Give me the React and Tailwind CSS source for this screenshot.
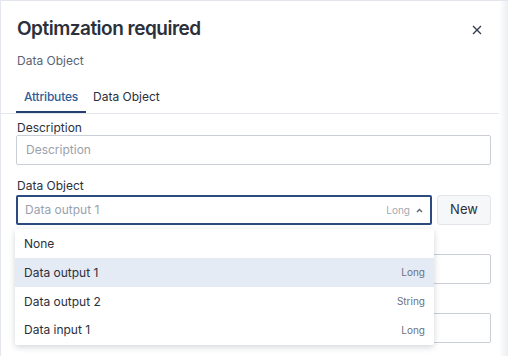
import React from "react";

const font = { fontFamily: "Inter, 'Noto Sans', sans-serif" };

export default function App() {
  return (
    <div
      className="relative w-[508px] h-[356px] overflow-hidden bg-white border-t border-l border-[#e3e6ec] flex"
      style={font}
    >
      <div className="flex-1 min-w-0 flex flex-col">
        {/* Header */}
        <div className="pl-4 pr-[14px] pt-[14px] flex items-start justify-between">
          <h1 className="text-[19px] leading-[28px] font-semibold text-[#2b303b] tracking-[-0.5px]">
            Optimzation required
          </h1>
          <button className="mt-[7px] w-[16px] h-[16px] flex items-center justify-center text-[#2f3a4c]">
            <svg width="10" height="10" viewBox="0 0 10 10" fill="none" stroke="currentColor" strokeWidth="1.3">
              <path d="M1 1L9 9M9 1L1 9" />
            </svg>
          </button>
        </div>
        <div className="pl-4 mt-[10px] text-[12px] leading-[16px] text-[#5b6372]">Data Object</div>

        {/* Tabs */}
        <div className="mt-[21px] flex pl-[15px] border-b border-[#e3e6ec] text-[12px] leading-[14px]">
          <div className="px-[8px] pb-[7px] border-b-2 border-[#23406f] text-[#2f5d99] font-medium tracking-[-0.2px]">
            Attributes
          </div>
          <div className="px-[7px] pb-[7px] text-[#2b303b]">Data Object</div>
        </div>

        {/* Form */}
        <div className="pl-[15px] pr-[8px] pt-[7px] flex flex-col">
          <label className="pl-px text-[12px] leading-[14px] text-[#2b303b]">Description</label>
          <div className="h-[30px] border border-[#c9ced7] rounded-[2px] flex items-center px-[9px] text-[12px] text-[#9aa1ad]">
            Description
          </div>

          <label className="mt-[14px] pl-px text-[12px] leading-[14px] text-[#2b303b]">Data Object</label>
          <div className="mt-[2px] flex gap-[5px]">
            <div className="flex-1 h-[30px] border-2 border-[#2b4a7d] rounded-[2px] flex items-center pl-[7px] pr-[7px] text-[12px] text-[#9aa1ad]">
              <span className="flex-1">Data output 1</span>
              <span className="text-[10px] text-[#a3a9b3] mr-[6px]">Long</span>
              <svg width="7" height="5" viewBox="0 0 7 5" fill="none" stroke="#5b6372" strokeWidth="1.4">
                <path d="M1 4L3.5 1.5L6 4" />
              </svg>
            </div>
            <button className="w-[54px] h-[30px] rounded-[3px] border border-[#e2e5ea] bg-[#f6f7f9] text-[13px] text-[#2b303b]">
              New
            </button>
          </div>

          <div className="mt-[15px] h-[14px]" />
          <div className="h-[30px] border border-[#c9ced7] rounded-[2px]" />
          <div className="mt-[15px] h-[14px]" />
          <div className="h-[30px] border border-[#c9ced7] rounded-[2px]" />
        </div>
      </div>

      <div className="w-[9px] bg-gradient-to-r from-white to-[#eceef2]" />

      {/* Dropdown overlay */}
      <div className="absolute left-[14px] top-[228px] w-[419px] bg-white rounded-[2px] shadow-[0_2px_6px_rgba(30,40,60,0.2)] py-px text-[12px] text-[#2b303b]">
        <div className="h-[28px] flex items-center px-[9px]">None</div>
        <div className="h-[29px] flex items-center justify-between px-[9px] bg-[#e5ebf4]">
          <span>Data output 1</span>
          <span className="text-[10px] text-[#6b7280]">Long</span>
        </div>
        <div className="h-[29px] flex items-center justify-between px-[9px]">
          <span>Data output 2</span>
          <span className="text-[10px] text-[#6b7280]">String</span>
        </div>
        <div className="h-[28px] flex items-center justify-between px-[9px]">
          <span>Data input 1</span>
          <span className="text-[10px] text-[#6b7280]">Long</span>
        </div>
      </div>
    </div>
  );
}
